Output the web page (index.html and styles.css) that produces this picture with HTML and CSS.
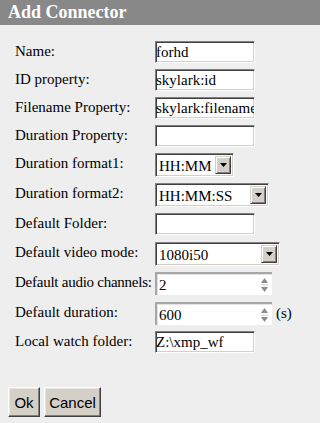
FILE: index.html
```html
<!DOCTYPE html>
<html>
<head>
<meta charset="utf-8">
<title>Add Connector</title>
<link rel="stylesheet" href="styles.css">
</head>
<body>
<div class="title">Add Connector</div>
<form class="form">
  <div class="row r28"><label class="lbl">Name:</label><input class="txt" type="text" value="forhd"></div>
  <div class="row r28"><label class="lbl">ID property:</label><input class="txt" type="text" value="skylark:id"></div>
  <div class="row r28"><label class="lbl">Filename Property:</label><input class="txt" type="text" value="skylark:filename"></div>
  <div class="row r28"><label class="lbl">Duration Property:</label><input class="txt" type="text" value=""></div>
  <div class="row r30"><label class="lbl">Duration format1:</label>
    <div class="dd w79"><span class="dd-val">HH:MM</span><span class="dd-btn"><svg width="7" height="4" viewBox="0 0 7 4"><path d="M0 0h7L3.5 4z" fill="#000"/></svg></span></div>
  </div>
  <div class="row r30"><label class="lbl">Duration format2:</label>
    <div class="dd w114"><span class="dd-val">HH:MM:SS</span><span class="dd-btn"><svg width="7" height="4" viewBox="0 0 7 4"><path d="M0 0h7L3.5 4z" fill="#000"/></svg></span></div>
  </div>
  <div class="row r29"><label class="lbl">Default Folder:</label><input class="txt" type="text" value=""></div>
  <div class="row r30"><label class="lbl">Default video mode:</label>
    <div class="dd w125"><span class="dd-val">1080i50</span><span class="dd-btn"><svg width="7" height="4" viewBox="0 0 7 4"><path d="M0 0h7L3.5 4z" fill="#000"/></svg></span></div>
  </div>
  <div class="row r30"><label class="lbl lbl-tight">Default audio channels:</label>
    <div class="num"><span class="num-val">2</span><span class="spin"><svg width="9" height="16" viewBox="0 0 9 16"><path d="M4.5 1L8 6H1z" fill="#8a8a8a"/><path d="M1 8h7" stroke="#c8c8c8" stroke-width="1"/><path d="M1 10h7L4.5 15z" fill="#8a8a8a"/></svg></span></div>
  </div>
  <div class="row r29"><label class="lbl">Default duration:</label>
    <div class="num"><span class="num-val">600</span><span class="spin"><svg width="9" height="16" viewBox="0 0 9 16"><path d="M4.5 1L8 6H1z" fill="#8a8a8a"/><path d="M1 8h7" stroke="#c8c8c8" stroke-width="1"/><path d="M1 10h7L4.5 15z" fill="#8a8a8a"/></svg></span></div>
    <span class="unit">(s)</span>
  </div>
  <div class="row"><label class="lbl">Local watch folder:</label><input class="txt" type="text" value="Z:\xmp_wf"></div>
  <div class="buttons">
    <button type="button" class="btn btn-ok">Ok</button>
    <button type="button" class="btn btn-cancel">Cancel</button>
  </div>
</form>
</body>
</html>
```
FILE: styles.css
```css
html, body {
  margin: 0;
  padding: 0;
  background: #eeeeee;
  font-family: "Liberation Serif", "Times New Roman", serif;
  font-size: 15px;
  color: #000;
}

.title {
  height: 25px;
  background: #888888;
  color: #ffffff;
  font-weight: bold;
  font-size: 18px;
  line-height: 25px;
  padding-left: 8px;
  box-sizing: border-box;
}

.form {
  margin: 0;
  padding: 16px 0 0 0;
}

.row {
  display: flex;
  align-items: flex-start;
  padding-left: 15px;
}

.r28 { height: 28px; }
.r29 { height: 29px; }
.r30 { height: 30px; }

.lbl {
  width: 140px;
  flex: none;
  white-space: nowrap;
  padding-top: 2px;
  line-height: 17px;
}

.lbl-tight {
  letter-spacing: -0.25px;
}

.txt {
  width: 100px;
  height: 22px;
  box-sizing: border-box;
  margin: 0;
  padding: 0;
  font-family: "Liberation Serif", "Times New Roman", serif;
  font-size: 15px;
  color: #000;
  background: #fff;
  border: 1px solid;
  border-color: #808080 #ffffff #ffffff #808080;
  box-shadow: inset 1px 1px 0 #404040, inset -1px -1px 0 #d4d0c8;
  outline: none;
}

.dd {
  height: 24px;
  box-sizing: border-box;
  display: flex;
  align-items: stretch;
  background: #fff;
  border: 1px solid;
  border-color: #808080 #ffffff #ffffff #808080;
  box-shadow: inset 1px 1px 0 #404040, inset -1px -1px 0 #d4d0c8;
  padding: 2px;
}

.w79 { width: 79px; }
.w114 { width: 114px; }
.w125 { width: 125px; }

.dd-val {
  flex: 1;
  line-height: 20px;
  padding-left: 1px;
  white-space: nowrap;
  overflow: hidden;
}

.dd-btn {
  width: 16px;
  flex: none;
  box-sizing: border-box;
  background: #d4d0c8;
  border: 1px solid;
  border-color: #d4d0c8 #404040 #404040 #d4d0c8;
  box-shadow: inset 1px 1px 0 #ffffff, inset -1px -1px 0 #808080;
  display: flex;
  align-items: center;
  justify-content: center;
}

.num {
  width: 117px;
  height: 23px;
  box-sizing: border-box;
  display: flex;
  align-items: center;
  background: #fff;
  border-top: 2px solid #a6a6a6;
  border-left: 2px solid #a6a6a6;
  box-shadow: inset 1px 1px 0 #e3e3e3;
  padding: 0 3px 0 2px;
}

.num-val {
  flex: 1;
  line-height: 20px;
}

.spin {
  display: flex;
  align-items: center;
}

.spin svg { display: block; }

.unit {
  padding-left: 4px;
  line-height: 22px;
}

.buttons {
  display: flex;
  gap: 4px;
  padding: 34px 0 0 8px;
}

.btn {
  height: 30px;
  margin: 0;
  padding: 0;
  box-sizing: border-box;
  font-family: "Liberation Sans", Arial, sans-serif;
  font-size: 15px;
  color: #000;
  background: #d4d0c8;
  border: 1px solid;
  border-color: #ffffff #404040 #404040 #ffffff;
  box-shadow: inset -1px -1px 0 #808080, inset 1px 1px 0 #e8e6e0;
}

.btn-ok { width: 32px; }
.btn-cancel { width: 57px; }
```
